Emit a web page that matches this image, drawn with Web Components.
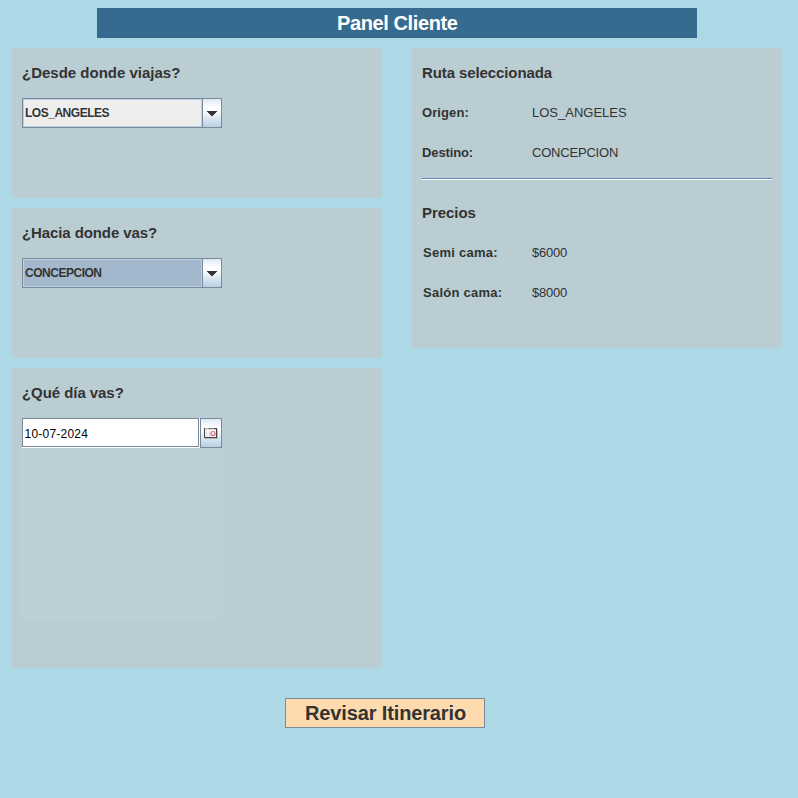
<!DOCTYPE html>
<html lang="es">
<head>
<meta charset="utf-8">
<title>Panel Cliente</title>
<style>
html, body { margin: 0; height: 100%; overflow: hidden; background: #add8e6; }
body { font-family: "Liberation Sans", Arial, sans-serif; color: #333; }
</style>
</head>
<body>
<client-panel></client-panel>
<script>
function define(name, html) {
  const template = document.createElement('template');
  template.innerHTML = html;
  customElements.define(name, class extends HTMLElement {
    constructor() {
      super();
      this.attachShadow({ mode: 'open' }).append(template.content.cloneNode(true));
    }
  });
}

define('title-bar', `<style>
:host { display: block; box-sizing: border-box; width: 600px; height: 30px; margin-left: 97px; background: #366a8f; color: #fff; font: bold 20px/30px "Liberation Sans", Arial, sans-serif; letter-spacing: -0.4px; text-indent: 0.5px; text-align: center; }
</style><slot></slot>`);

define('info-panel', `<style>
:host { display: flex; flex-direction: column; box-sizing: border-box; width: 370px; height: 150px; padding: 10px; background: #bacdd2; }
</style><slot></slot>`);

define('panel-heading', `<style>
:host { display: block; height: 30px; font: bold 15px/30px "Liberation Sans", Arial, sans-serif; letter-spacing: var(--heading-spacing, -0.06px); white-space: nowrap; }
</style><slot></slot>`);

define('combo-box', `<style>
:host { display: flex; box-sizing: border-box; width: 200px; height: 30px; margin-top: 10px; border: 1px solid #7a8a99; font: bold 12px/26px "Liberation Sans", Arial, sans-serif; letter-spacing: -0.48px; }
.value { flex: 1; box-sizing: border-box; border: 1px solid #b8cfe5; padding-left: 1px; background: var(--value-bg, #eee); white-space: nowrap; }
.arrow { box-sizing: border-box; width: 19px; border-left: 1px solid #7a8a99; background: linear-gradient(#dde8f3, #fff 30%, #fff 38%, #b8cfe5); }
svg { display: block; }
</style><div class="value"><slot></slot></div><div class="arrow"><svg width="18" height="28" shape-rendering="crispEdges"><path fill="#333" d="M4 12h10v1h-1v1h-1v1h-1v1h-1v1H8v-1H7v-1H6v-1H5v-1H4z"/></svg></div>`);

define('date-chooser', `<style>
:host { display: flex; width: 200px; height: 30px; margin-top: 10px; font: 12px/30px "Liberation Sans", Arial, sans-serif; letter-spacing: 0.22px; color: #000; }
.field { box-sizing: border-box; width: 178px; background: #fff; padding: 0 1px 1px 0; }
.inner { box-sizing: border-box; height: 29px; border: 1px solid #7a8a99; padding-left: 1.5px; background: #fff; white-space: nowrap; }
.pick { box-sizing: border-box; width: 22px; border: 1px solid #7a8a99; background: linear-gradient(#dde8f3, #fff 30%, #fff 38%, #b8cfe5); }
svg { display: block; }
</style><div class="field"><div class="inner"><slot></slot></div></div><div class="pick"><svg width="20" height="28" shape-rendering="crispEdges"><path fill="#999" opacity=".6" d="M4 10h13v10H4z"/><path fill="#444" d="M3 9h13v10H3z"/><path fill="#f6f6f6" d="M4 10h11v8H4z"/><path fill="#e8b05c" d="M4 9h4v1H4z"/><path fill="#5f86bd" d="M9 9h4v1H9z"/><path fill="#ddd" d="M4 10h11v1H4zM5 12h1v6H5zM8 12h1v6H8z"/><circle cx="12" cy="14.5" r="2" fill="#fff" stroke="#e76267" stroke-width="1.2" shape-rendering="auto"/></svg></div>`);

define('calendar-area', `<style>
:host { display: block; width: 202px; height: 172px; margin-left: -2px; background: #bccfd4; }
</style>`);

define('data-row', `<style>
:host { display: flex; height: 30px; margin-top: 10px; font: 13px/30px "Liberation Sans", Arial, sans-serif; white-space: nowrap; }
.label { flex: 0 0 110px; font-weight: bold; letter-spacing: var(--label-spacing, 0); text-indent: var(--label-indent, 0); }
.value { letter-spacing: var(--value-spacing, 0); }
</style><span class="label"><slot name="label"></slot></span><span class="value"><slot></slot></span>`);

define('rule-line', `<style>
:host { display: block; height: 1px; margin: 10px 0 18px; border-top: 1px solid #6382bf; background: #fff; }
</style>`);

define('action-button', `<style>
:host { display: block; box-sizing: border-box; width: 200px; height: 30px; border: 1px solid #7a8a99; margin: 30px 0 0 285px; background: #fedbae; font: bold 20px/28px "Liberation Sans", Arial, sans-serif; letter-spacing: -0.13px; text-indent: 1px; text-align: center; white-space: nowrap; }
</style><slot></slot>`);

define('client-panel', `<style>
:host { display: block; box-sizing: border-box; height: 100vh; padding-top: 8px; background: #add8e6; }
main { display: flex; align-items: flex-start; gap: 30px; padding: 10px 0 0 12px; }
.trip { display: flex; flex-direction: column; gap: 10px; }
.day, .summary { height: 300px; }
.price { --label-indent: 1px; --label-spacing: 0.25px; --value-spacing: -0.22px; }
</style>
<title-bar>Panel Cliente</title-bar>
<main>
  <div class="trip">
    <info-panel><panel-heading style="--heading-spacing:0">¿Desde donde viajas?</panel-heading><combo-box>LOS_ANGELES</combo-box></info-panel>
    <info-panel><panel-heading style="--heading-spacing:-0.1px">¿Hacia donde vas?</panel-heading><combo-box style="--value-bg:#a3b8cc">CONCEPCION</combo-box></info-panel>
    <info-panel class="day"><panel-heading>¿Qué día vas?</panel-heading><date-chooser>10-07-2024</date-chooser><calendar-area></calendar-area></info-panel>
  </div>
  <info-panel class="summary">
    <panel-heading style="--heading-spacing:-0.1px">Ruta seleccionada</panel-heading>
    <data-row style="--label-spacing:0.1px"><span slot="label">Origen:</span>LOS_ANGELES</data-row>
    <data-row style="--label-spacing:-0.12px;--value-spacing:-0.2px"><span slot="label">Destino:</span>CONCEPCION</data-row>
    <rule-line></rule-line>
    <panel-heading>Precios</panel-heading>
    <data-row class="price"><span slot="label">Semi cama:</span>$6000</data-row>
    <data-row class="price"><span slot="label">Salón cama:</span>$8000</data-row>
  </info-panel>
</main>
<action-button>Revisar Itinerario</action-button>`);
</script>
</body>
</html>
